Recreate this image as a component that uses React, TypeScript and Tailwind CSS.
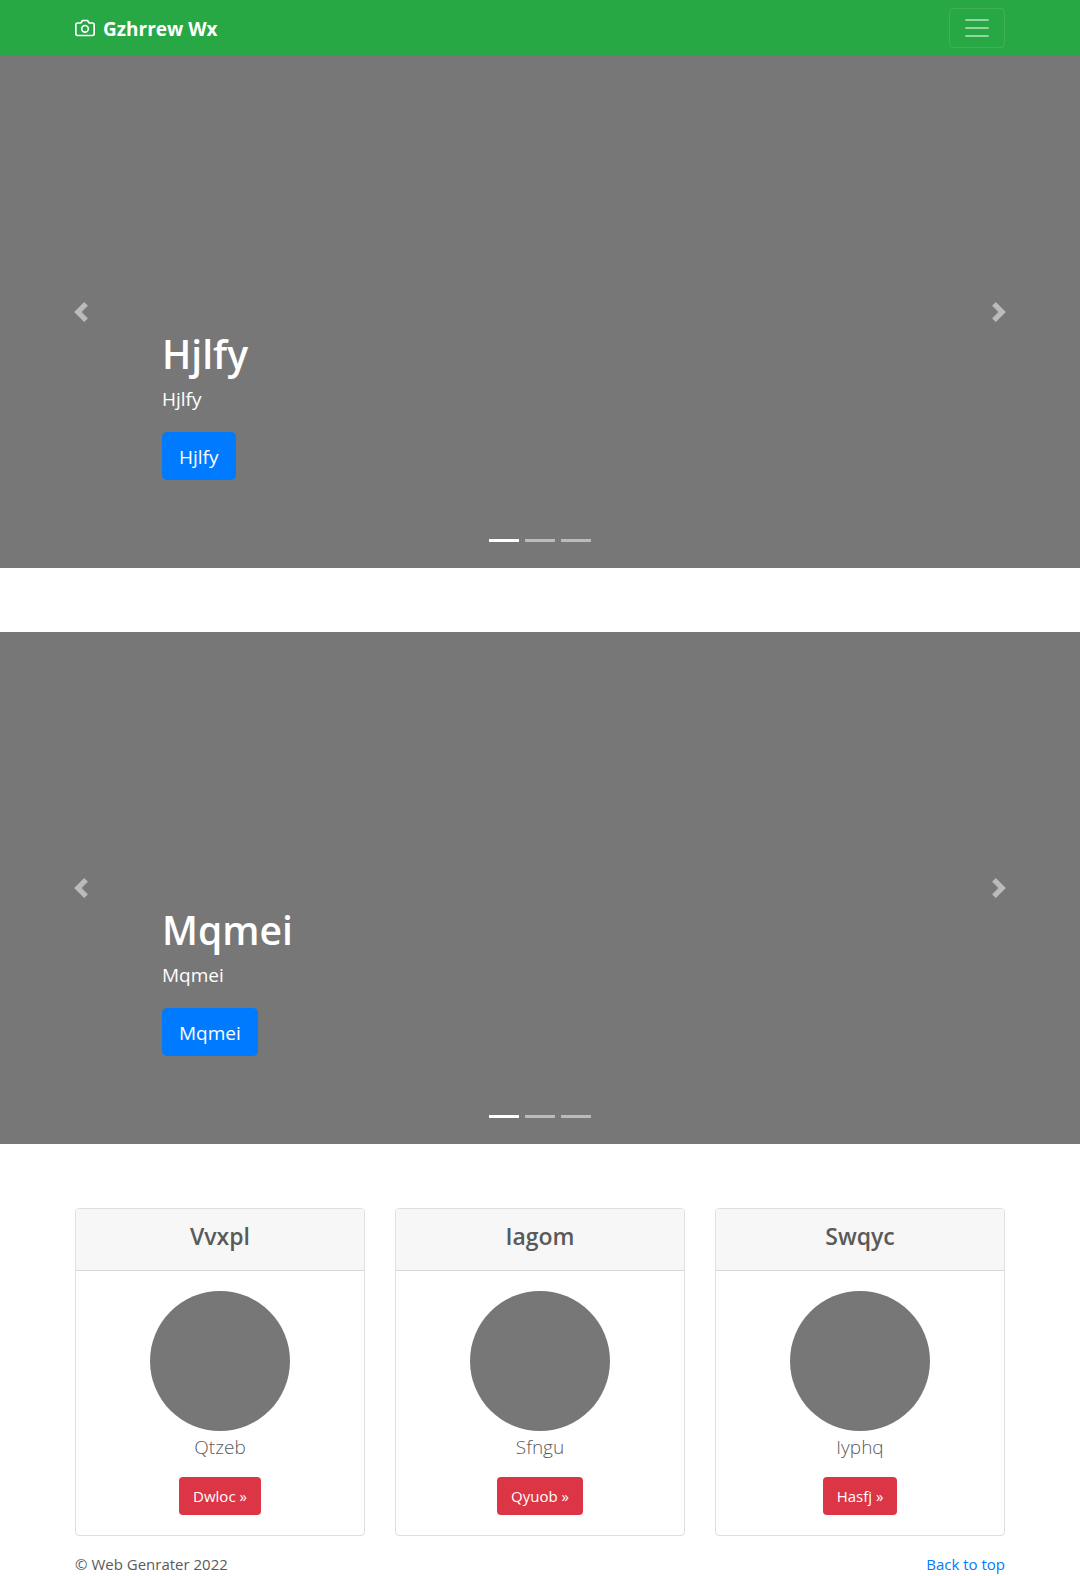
import React from "react";

function Navbar() {
  return (
    <header className="bg-[#28a745]">
      <nav className="mx-auto flex h-14 max-w-[960px] items-center justify-between px-[15px]">
        <a href="#" className="flex items-center text-[19px] leading-[30px] font-bold text-white">
          <svg
            className="mr-2 size-5"
            viewBox="0 0 24 24"
            fill="none"
            stroke="currentColor"
            strokeWidth="2"
            strokeLinecap="round"
            strokeLinejoin="round"
            aria-hidden="true"
          >
            <path d="M23 19a2 2 0 0 1-2 2H3a2 2 0 0 1-2-2V8a2 2 0 0 1 2-2h4l2-3h6l2 3h4a2 2 0 0 1 2 2z" />
            <circle cx="12" cy="13" r="4" />
          </svg>
          <span className="pt-0.5">Gzhrrew Wx</span>
        </a>
        <button
          type="button"
          aria-label="Toggle navigation"
          className="flex h-10 w-14 items-center justify-center rounded border border-white/10"
        >
          <svg className="size-[30px]" viewBox="0 0 30 30" aria-hidden="true">
            <path
              stroke="rgba(255,255,255,0.5)"
              strokeLinecap="round"
              strokeMiterlimit="10"
              strokeWidth="2"
              d="M4 7h22M4 15h22M4 23h22"
            />
          </svg>
        </button>
      </nav>
    </header>
  );
}

function Carousel({ title }: { title: string }) {
  return (
    <section className="relative mb-16 grid h-[512px] grid-cols-[15%_1fr_15%] bg-[#777] text-white" aria-label={title}>
      <button type="button" aria-label="Previous" className="flex items-center justify-center opacity-50">
        <svg className="size-5" viewBox="0 0 8 8" fill="currentColor" aria-hidden="true">
          <path d="M5.25 0l-4 4 4 4 1.5-1.5L4.25 4l2.5-2.5L5.25 0z" />
        </svg>
      </button>
      <div className="flex flex-col items-start justify-end pb-[88px]">
        <h1 className="mb-1.5 text-[39px] leading-[48px] font-semibold">{title}</h1>
        <p className="mb-[18px] text-[19px] leading-[30px]">{title}</p>
        <a href="#" className="rounded-[5px] bg-[#007bff] px-[17px] pt-[10px] pb-2 text-[19px] leading-[30px]">
          {title}
        </a>
      </div>
      <button type="button" aria-label="Next" className="flex items-center justify-center opacity-50">
        <svg className="size-5" viewBox="0 0 8 8" fill="currentColor" aria-hidden="true">
          <path d="M2.75 0l-1.5 1.5L3.75 4l-2.5 2.5L2.75 8l4-4-4-4z" />
        </svg>
      </button>
      <div className="absolute inset-x-0 bottom-[26px] flex justify-center gap-[6px]">
        <button type="button" aria-label="Slide 1" className="h-[3px] w-[30px] bg-white" />
        <button type="button" aria-label="Slide 2" className="h-[3px] w-[30px] bg-white/50" />
        <button type="button" aria-label="Slide 3" className="h-[3px] w-[30px] bg-white/50" />
      </div>
    </section>
  );
}

const cards = [
  { heading: "Vvxpl", text: "Qtzeb", action: "Dwloc" },
  { heading: "Iagom", text: "Sfngu", action: "Qyuob" },
  { heading: "Swqyc", text: "Iyphq", action: "Hasfj" },
];

export default function App() {
  return (
    <div className="bg-white font-['Open_Sans','Noto_Sans',sans-serif] text-[#5a5a5a]">
      <Navbar />
      <main>
        <Carousel title="Hjlfy" />
        <Carousel title="Mqmei" />
        <div className="mx-auto grid max-w-[960px] grid-cols-3 gap-[30px] px-[15px]">
          {cards.map((card) => (
            <article key={card.heading} className="overflow-hidden rounded border border-[#dfdfdf] text-center">
              <h2 className="border-b border-[#d8d8d8] bg-[#f7f7f7] pt-[13px] pb-[19px] text-[23px] leading-[29px] font-semibold">
                {card.heading}
              </h2>
              <div className="flex flex-col items-center p-5">
                <div className="size-[140px] rounded-full bg-[#777]" />
                <p className="mb-[14px] text-[19px] leading-8 font-light">{card.text}</p>
                <a href="#" className="rounded bg-[#dc3545] px-[14px] py-[7px] text-[15px] leading-6 text-white">
                  {card.action} »
                </a>
              </div>
            </article>
          ))}
        </div>
      </main>
      <footer className="mx-auto flex max-w-[960px] justify-between px-[15px] pt-4 text-[15px] leading-6">
        <p>© Web Genrater 2022</p>
        <a href="#" className="text-[#007bff]">
          Back to top
        </a>
      </footer>
    </div>
  );
}
